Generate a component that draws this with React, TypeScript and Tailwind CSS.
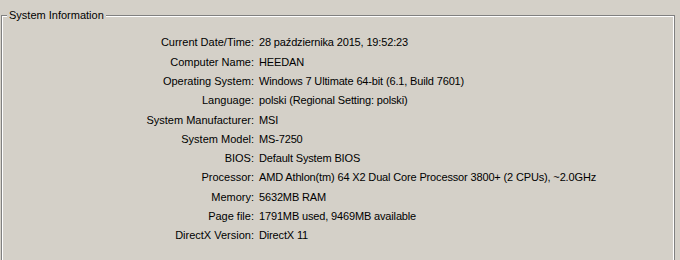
const rows: [string, string][] = [
  ["Current Date/Time:", "28 października 2015, 19:52:23"],
  ["Computer Name:", "HEEDAN"],
  ["Operating System:", "Windows 7 Ultimate 64-bit (6.1, Build 7601)"],
  ["Language:", "polski (Regional Setting: polski)"],
  ["System Manufacturer:", "MSI"],
  ["System Model:", "MS-7250"],
  ["BIOS:", "Default System BIOS"],
  ["Processor:", "AMD Athlon(tm) 64 X2 Dual Core Processor 3800+ (2 CPUs), ~2.0GHz"],
  ["Memory:", "5632MB RAM"],
  ["Page file:", "1791MB used, 9469MB available"],
  ["DirectX Version:", "DirectX 11"],
];

export default function App() {
  return (
    <main
      className="w-[680px] h-[260px] overflow-hidden bg-[#d4d0c8] text-black text-[11px]"
      style={{ fontFamily: '"Liberation Sans", Arial, sans-serif' }}
    >
      {/* group box */}
      <div className="relative ml-[1px] mt-[15px] w-[674px] h-[260px] border-l border-t border-r border-[#808080]">
        <span className="absolute left-[5px] top-[-9px] bg-[#d4d0c8] px-[2px] leading-[16px]">
          System Information
        </span>
        <div className="h-full border-l border-t border-r border-white pt-[16px]">
          {rows.map(([label, value]) => (
            <div key={label} className="flex h-[19.3px] items-center">
              <div className="w-[251px] text-right">{label}</div>
              <div className="pl-[5px] whitespace-nowrap tracking-[-0.15px]">{value}</div>
            </div>
          ))}
        </div>
      </div>
    </main>
  );
}
